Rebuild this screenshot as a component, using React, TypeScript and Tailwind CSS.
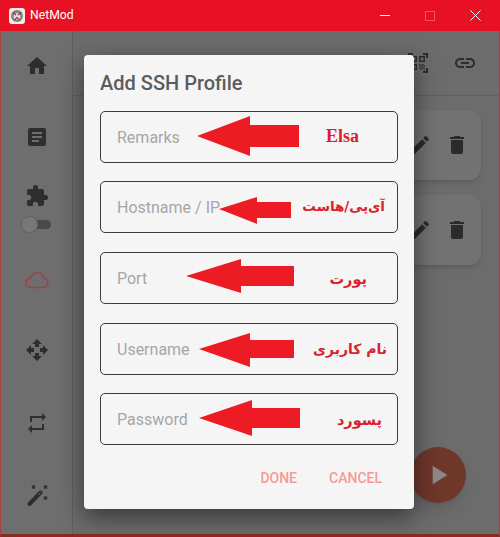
import {
  MdHome,
  MdArticle,
  MdExtension,
  MdOpenWith,
  MdRepeat,
  MdQrCodeScanner,
  MdLink,
  MdEdit,
  MdDelete,
  MdPlayArrow,
  MdSort,
} from "react-icons/md";

const FIELDS = [
  { hint: "Remarks", note: "Elsa", rowClass: "", noteClass: "right-[38px] top-[12px] font-['Liberation_Serif',serif] text-[18px]" },
  { hint: "Hostname / IP", note: "آی‌پی/هاست", rowClass: "mt-[18px]", noteClass: "right-[12px] top-[12px] text-[13.5px]" },
  { hint: "Port", note: "پورت", rowClass: "mt-[19px]", noteClass: "right-[30px] top-[14px] text-[14.5px]" },
  { hint: "Username", note: "نام کاربری", rowClass: "mt-[19px]", noteClass: "right-[10px] top-[13px] text-[14px]" },
  { hint: "Password", note: "پسورد", rowClass: "mt-[18px]", noteClass: "right-[15px] top-[14px] text-[14.5px]" },
];

// hand drawn arrows over the form: tip, head base, tail
const ARROWS = [
  "197,136 250,116 250,125 299,125 299,147 250,147 250,156",
  "219,209 257,197 257,202 291,202 291,218 257,218 257,224",
  "186,276 241,259 241,266 294,266 294,286 241,286 241,293",
  "199,349 250,333 250,340 294,340 294,358 250,358 250,367",
  "199,418 252,400 252,408 300,408 300,428 252,428 252,436",
];

function Wand() {
  return (
    <svg className="mt-[48px]" width="24" height="24" viewBox="0 0 24 24" fill="none">
      <path d="M4.5 21 15.5 9.5" stroke="#2e2e2e" strokeWidth="4" strokeLinecap="round" />
      <path d="M13.2 11.8 15.5 9.5" stroke="#6e6e6e" strokeWidth="1" />
      <path
        d="M7 2.5l3 3M10 2.5l-3 3M19 2.5l3 3M22 2.5l-3 3M19 13.5l3 3M22 13.5l-3 3"
        stroke="#2e2e2e"
        strokeWidth="1.5"
      />
    </svg>
  );
}

function CloudOutline() {
  return (
    <svg className="mt-[38px]" width="24" height="18" viewBox="0 0 24 18" fill="none">
      <path
        d="M6 16.5C3 16.5 1 14.4 1 11.8 1 9.3 3 7.4 5.4 7.2 6.5 3.8 9 1.5 12.2 1.5c3.4 0 6 2.4 6.6 5.7 2.5.3 4.2 2.2 4.2 4.6 0 2.6-2 4.7-4.8 4.7Z"
        stroke="#9a4543"
        strokeWidth="1.6"
      />
    </svg>
  );
}

export default function App() {
  return (
    <div className="relative flex h-[537px] w-[500px] flex-col overflow-hidden bg-[#6c6c6c] font-['Roboto',sans-serif]">
      {/* TITLE BAR */}
      <div className="flex h-[31px] shrink-0 items-center bg-[#e81123] pl-[9px] text-white">
        <svg width="16" height="16" viewBox="0 0 16 16">
          <rect width="16" height="16" rx="3" fill="#f1ece8" />
          <circle cx="8" cy="8" r="6" fill="#8d7d80" />
          <circle cx="8" cy="8.5" r="3.4" fill="#e9dcdc" />
          <path d="M4 4.5 7 7M12 4.5 9 7M5.5 12 8 9.5l2.5 2.5" stroke="#7a3a40" strokeWidth="1.2" fill="none" />
        </svg>
        <span className="ml-[5px] text-[12.2px] leading-none">NetMod</span>
        <div className="ml-auto flex items-center pr-[19px]">
          <div className="h-px w-[10px] bg-white" />
          <div className="ml-[35px] h-[10px] w-[10px] border border-[#f4525f]" />
          <svg className="ml-[35px]" width="11" height="11" viewBox="0 0 11 11">
            <path d="M.5.5l10 10M10.5.5l-10 10" stroke="#fff" strokeWidth="1" />
          </svg>
        </div>
      </div>

      <div className="flex min-h-0 flex-1 border-x border-x-[#a8403f] border-b-[3px] border-b-[#8a2c1c]">
        {/* SIDEBAR */}
        <div className="flex w-[72px] shrink-0 flex-col items-center border-r border-[#606060] bg-[#6e6e6e] pt-[23px] text-[#2e2e2e]">
          <MdHome size={24} />
          <MdArticle size={24} className="mt-[47px]" />
          <MdExtension size={24} className="mt-[35px]" />
          <div className="relative mt-[8px] h-[17px] w-[30px] -translate-x-[1px]">
            <div className="absolute left-[2px] right-0 top-[4px] h-[9px] rounded-full bg-[#4a4a4a]" />
            <div className="absolute left-0 top-0 h-[17px] w-[17px] rounded-full border border-[#626262] bg-[#787878]" />
          </div>
          <CloudOutline />
          <MdOpenWith size={24} className="mt-[49px]" />
          <MdRepeat size={24} className="mt-[49px]" />
          <Wand />
        </div>

        {/* MAIN */}
        <div className="relative min-w-0 flex-1 bg-[#6c6c6c]">
          <div className="flex h-[65px] items-center justify-end gap-[23px] border-b border-[#5f5f5f] pr-[22px] text-[#2e2e2e]">
            <MdSort size={24} className="mr-[3px]" />
            <MdQrCodeScanner size={24} />
            <MdLink size={24} />
          </div>
          <div className="flex flex-col gap-[15px] pl-[14px] pr-[18px] pt-[14px]">
            {[0, 1].map((i) => (
              <div key={i} className="flex h-[70px] items-center justify-end gap-[13px] rounded-[12px] bg-[#727272] pr-[12px] text-[#2b2b2b] shadow-md">
                <MdEdit size={24} />
                <MdDelete size={24} />
              </div>
            ))}
          </div>
          <div className="absolute bottom-[31px] right-[33px] flex h-[56px] w-[56px] items-center justify-center rounded-full bg-[#70372b] shadow-lg">
            <MdPlayArrow size={32} className="text-[#8a8a8a]" />
          </div>
        </div>
      </div>

      {/* DIALOG */}
      <div className="absolute left-[84px] top-[55px] flex h-[454px] w-[330px] flex-col rounded-[4px] bg-[#f5f5f5] px-[16px] shadow-[0_8px_24px_rgba(0,0,0,0.5)]">
        <h2 className="mt-[15px] text-[20px] font-medium leading-[26px] text-[#5c5c5c]">Add SSH Profile</h2>
        <div className="mt-[15px] flex flex-col">
          {FIELDS.map((f) => (
            <div key={f.hint} className={`relative flex h-[52px] items-center rounded-[5px] border border-[#3c3c3c] pl-[16px] pt-[2px] text-[16px] text-[#a6a6a6] ${f.rowClass}`}>
              {f.hint}
              <span dir="rtl" className={`absolute font-['DejaVu_Sans',sans-serif] font-bold leading-[24px] text-[#d9222c] ${f.noteClass}`}>
                {f.note}
              </span>
            </div>
          ))}
        </div>
        <div className="mt-[23px] flex justify-end gap-[32px] pr-[16px] text-[14px] font-medium text-[#f69a96]">
          <span>DONE</span>
          <span>CANCEL</span>
        </div>
      </div>

      {/* ARROWS */}
      <svg className="absolute left-0 top-0" width="500" height="537">
        {ARROWS.map((p) => (
          <polygon key={p} points={p} fill="#ed1c24" />
        ))}
      </svg>
    </div>
  );
}
